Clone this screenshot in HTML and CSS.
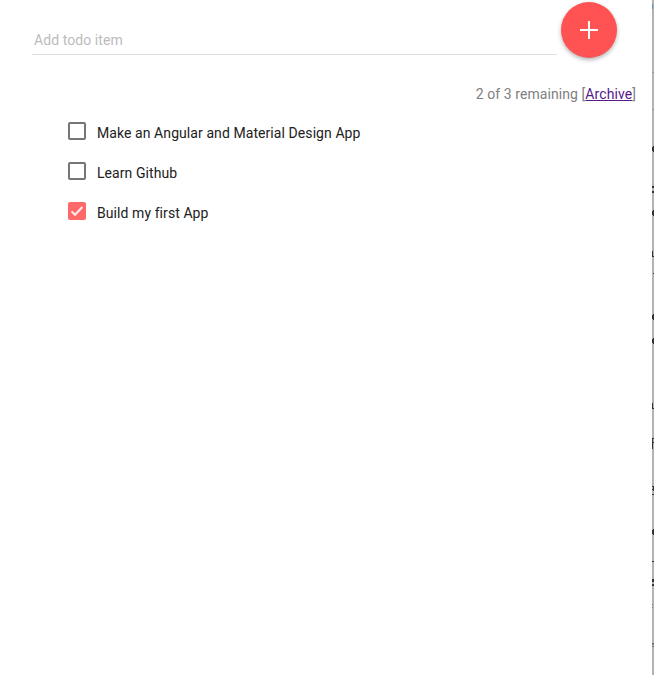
FILE: index.html
```
<!DOCTYPE html>
<html lang="en">
<head>
<meta charset="utf-8">
<title>Todo</title>
<link rel="stylesheet" href="styles.css">
</head>
<body>
<main class="app">
  <form class="add-form">
    <div class="field">Add todo item</div>
    <button class="fab" type="button" aria-label="Add">
      <svg width="24" height="24" viewBox="0 0 24 24"><path d="M3 12H21M12 3V21" stroke="#fff" stroke-width="2"/></svg>
    </button>
  </form>
  <p class="summary"><span>2 of 3 remaining [</span><a href="#">Archive</a><span>]</span></p>
  <ul class="todos">
    <li><span class="box"></span><span class="label">Make an Angular and Material Design App</span></li>
    <li><span class="box"></span><span class="label">Learn Github</span></li>
    <li><span class="box checked"><svg width="18" height="18" viewBox="0 0 18 18"><path d="M3.5 9.2L7 12.8L14.4 5" fill="none" stroke="#fff" stroke-opacity=".87" stroke-width="2"/></svg></span><span class="label">Build my first App</span></li>
  </ul>
</main>
<aside class="edge">
  <svg width="2" height="675" viewBox="0 0 2 675">
    <path fill="#5d93b5" d="M0 4h1v5H0z"/>
    <path fill="#999" d="M0 72h2v1H0zM0 109h2v1H0z"/>
    <path fill="#333" d="M1 146h1v6H1zM0 147h1v4H0zM0 186h2v2H0zM0 191h2v2H0zM1 210h1v6H1zM0 211h1v4H0zM0 251h1v6H0zM0 256h2v1H0zM1 273h1v1H1zM1 314h1v6H1zM0 315h1v4H0zM1 338h1v6H1zM0 339h1v4H0zM0 403h1v6H0zM0 408h2v1H0zM0 438h1v11H0zM0 438h2v1H0zM0 442h2v1H0zM0 486h2v1H0zM1 487h1v4H1zM0 489h1v1H0zM0 494h2v1H0zM1 529h1v6H1zM0 530h1v4H0zM0 561h2v1H0zM0 579h2v3H0zM0 584h2v2H0z"/>
    <path fill="#777" d="M0 604h1v1H0zM0 607h1v1H0zM0 643h2v2H0zM0 646h2v1H0z"/>
  </svg>
</aside>
</body>
</html>
```
FILE: styles.css
```
* { box-sizing: border-box; }
body {
  margin: 0;
  height: 675px;
  display: flex;
  overflow: hidden;
  background: #fff;
  font: 14px/20px Roboto, sans-serif;
  letter-spacing: 0.075px;
  color: #212121;
}
.app { flex: 1; }
.add-form {
  display: flex;
  align-items: flex-start;
  height: 84px;
  padding: 2px 0 0 32px;
  gap: 4px;
}
.field {
  width: 525px;
  height: 53px;
  padding: 28px 2px 0;
  border-bottom: 1px solid #dfdfdf;
  color: #bcbcbc;
}
.fab {
  display: flex;
  align-items: center;
  justify-content: center;
  width: 56px;
  height: 56px;
  padding: 0;
  border: 0;
  border-radius: 50%;
  background: #ff5252;
  box-shadow: 0 2px 4px rgba(0, 0, 0, .3);
}
.summary {
  display: flex;
  justify-content: flex-end;
  margin: 0;
  padding-right: 16px;
  color: #808080;
  white-space: pre;
}
.summary a { color: #551a8b; }
.todos {
  margin: 18px 0 0;
  padding: 0 0 0 68px;
  list-style: none;
}
.todos li {
  display: flex;
  height: 40px;
  gap: 11px;
}
.box {
  width: 18px;
  height: 18px;
  border: 2px solid #757575;
  border-radius: 2px;
}
.checked {
  border: 0;
  background: #ff6868;
}
.box svg { display: block; }
.label { margin-top: 1px; }
.edge {
  width: 2px;
  background: #b3b3b3;
}
.edge svg { display: block; }
```
